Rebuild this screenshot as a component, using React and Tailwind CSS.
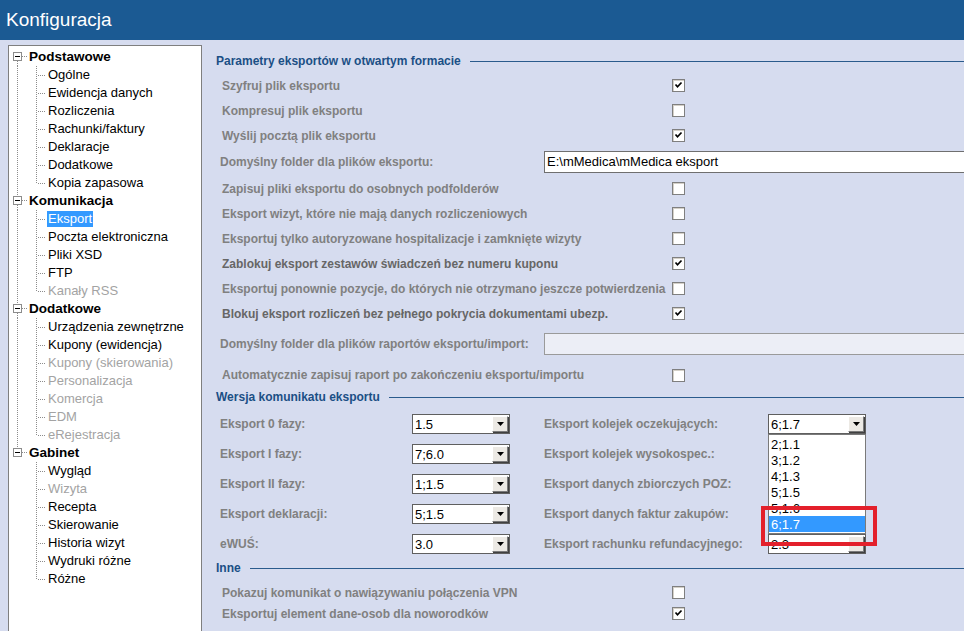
import React from "react";

const FONT = { fontFamily: '"Liberation Sans", Arial, sans-serif' };

const TREE = [
  {
    name: "Podstawowe",
    children: ["Ogólne", "Ewidencja danych", "Rozliczenia", "Rachunki/faktury", "Deklaracje", "Dodatkowe", "Kopia zapasowa"],
  },
  {
    name: "Komunikacja",
    children: ["Eksport", "Poczta elektroniczna", "Pliki XSD", "FTP", "Kanały RSS"],
  },
  {
    name: "Dodatkowe",
    children: [
      "Urządzenia zewnętrzne",
      "Kupony (ewidencja)",
      "Kupony (skierowania)",
      "Personalizacja",
      "Komercja",
      "EDM",
      "eRejestracja",
    ],
  },
  {
    name: "Gabinet",
    children: ["Wygląd", "Wizyta", "Recepta", "Skierowanie", "Historia wizyt", "Wydruki różne", "Różne"],
  },
];

const DISABLED = ["Kanały RSS", "Kupony (skierowania)", "Personalizacja", "Komercja", "EDM", "eRejestracja", "Wizyta"];

const DOT = { stroke: "#8c8c8c", strokeDasharray: "1 1", strokeWidth: 1 };

function RootRow({ name, first, last }) {
  return (
    <div className="flex items-center h-[18px]">
      <svg width="20" height="18" className="shrink-0">
        {!first && <line x1="8.5" y1="0" x2="8.5" y2="4" {...DOT} />}
        {!last && <line x1="8.5" y1="13" x2="8.5" y2="18" {...DOT} />}
        <line x1="13" y1="8.5" x2="19" y2="8.5" {...DOT} />
        <rect x="4.5" y="4.5" width="8" height="8" fill="#fff" stroke="#8c8c8c" />
        <line x1="6" y1="8.5" x2="11" y2="8.5" stroke="#000" />
      </svg>
      <span className="text-[13.5px] font-bold text-black leading-none">{name}</span>
    </div>
  );
}

function ChildRow({ name, lastChild, lastGroup }) {
  const disabled = DISABLED.includes(name);
  const selected = name === "Eksport";
  return (
    <div className="flex items-center h-[18px]">
      <svg width="38" height="18" className="shrink-0">
        {!lastGroup && <line x1="8.5" y1="0" x2="8.5" y2="18" {...DOT} />}
        <line x1="27.5" y1="0" x2="27.5" y2={lastChild ? 10 : 18} {...DOT} />
        <line x1="29" y1="9.5" x2="37" y2="9.5" {...DOT} />
      </svg>
      <span
        className={
          "text-[13px] leading-[16px] px-[1px] " +
          (selected ? "bg-[#3399ff] text-white" : disabled ? "text-[#a3a3a3]" : "text-black")
        }
      >
        {name}
      </span>
    </div>
  );
}

function Checkbox({ checked }) {
  return (
    <div className="w-[13px] h-[13px] border border-[#7f7f7f] bg-white flex items-center justify-center shadow-[inset_1px_1px_0_#d4d0c8]">
      {checked && (
        <svg width="9" height="9" viewBox="0 0 9 9">
          <path d="M1.5 3.5 L3.5 5.8 L7.5 1.5" stroke="#000" strokeWidth="1.7" fill="none" />
        </svg>
      )}
    </div>
  );
}

function Heading({ title }) {
  return (
    <div className="flex items-center h-[18px]">
      <span className="text-[12px] font-bold text-[#1b4f85] whitespace-nowrap">{title}</span>
      <div className="flex-1 h-px bg-[#2a5b8c] ml-[9px]" />
    </div>
  );
}

function CheckRow({ label, checked, dark, h = "h-[25px]" }) {
  return (
    <div className={"flex items-center pl-[6px] " + h}>
      <span className={"w-[450px] text-[12px] font-bold " + (dark ? "text-[#666666]" : "text-[#808080]")}>
        {label}
      </span>
      <Checkbox checked={checked} />
    </div>
  );
}

function Combo({ value, children }) {
  return (
    <div className="relative w-[98px] h-[20px] bg-white border border-[#5f5f5f] flex items-center">
      <span className="flex-1 pl-[2px] text-[13px] text-black leading-none">{value}</span>
      <div className="w-[16px] h-[16px] mr-[1px] bg-[#ece9e4] border-t border-l border-white border-b border-r border-b-[#7a7a7a] border-r-[#7a7a7a] flex items-center justify-center shadow-[1px_1px_0_#404040]">
        <svg width="7" height="4" viewBox="0 0 7 4">
          <path d="M0 0 H7 L3.5 4 Z" fill="#000" />
        </svg>
      </div>
      {children}
    </div>
  );
}

function ComboRow({ left, leftVal, right, rightVal, children }) {
  return (
    <div className="flex items-center h-[30px] pl-[4px]">
      <span className="w-[192px] text-[12px] font-bold text-[#808080]">{left}</span>
      <Combo value={leftVal} />
      <span className="w-[224px] ml-[34px] text-[12px] font-bold text-[#808080]">{right}</span>
      <Combo value={rightVal}>{children}</Combo>
    </div>
  );
}

const LIST = ["2;1.1", "3;1.2", "4;1.3", "5;1.5", "5;1.6", "6;1.7"];

function DropList() {
  return (
    <>
      <div className="absolute left-[-1px] top-[19px] w-[98px] bg-white border border-[#7a7a7a] py-[1px] z-10">
        {LIST.map((v) => (
          <div
            key={v}
            className={
              "h-[16px] flex items-center pl-[2px] text-[13px] leading-none " +
              (v === "6;1.7" ? "bg-[#3399ff] text-white" : "text-black")
            }
          >
            {v}
          </div>
        ))}
      </div>
      <div className="absolute left-[-8px] top-[91px] w-[116px] h-[40px] border-[4px] border-[#e3202b] z-20" />
    </>
  );
}

export default function App() {
  return (
    <div className="w-[964px] h-[631px] overflow-hidden bg-[#d6dcef] flex flex-col" style={FONT}>
      <div className="h-[40px] shrink-0 bg-[#1b5a93] flex items-center pl-[6px]">
        <span className="text-white text-[19px]">Konfiguracja</span>
      </div>

      <div className="flex flex-1 min-h-0 pt-[5px]">
        {/* tree */}
        <div className="ml-[8px] w-[194px] shrink-0 bg-white border border-[#7f7f7f] border-b-0 pt-[2px]">
          {TREE.map((g, gi) => (
            <div key={g.name + gi}>
              <RootRow name={g.name} first={gi === 0} last={gi === TREE.length - 1} />
              {g.children.map((c, ci) => (
                <ChildRow
                  key={c}
                  name={c}
                  lastChild={ci === g.children.length - 1}
                  lastGroup={gi === TREE.length - 1}
                />
              ))}
            </div>
          ))}
        </div>

        {/* settings */}
        <div className="flex-1 min-w-0 pl-[14px] pt-[7px]">
          <Heading title="Parametry eksportów w otwartym formacie" />
          <div className="pt-[3px]">
            <CheckRow label="Szyfruj plik eksportu" checked />
            <CheckRow label="Kompresuj plik eksportu" />
            <CheckRow label="Wyślij pocztą plik eksportu" checked />
            <div className="flex items-center h-[28px] pl-[4px]">
              <span className="w-[324px] text-[12px] font-bold text-[#808080]">Domyślny folder dla plików eksportu:</span>
              <div className="flex-1 h-[22px] bg-white border border-[#6f6f6f] border-r-0 flex items-center pl-[2px] text-[13px] text-black">
                E:\mMedica\mMedica eksport
              </div>
            </div>
            <CheckRow label="Zapisuj pliki eksportu do osobnych podfolderów" />
            <CheckRow label="Eksport wizyt, które nie mają danych rozliczeniowych" />
            <CheckRow label="Eksportuj tylko autoryzowane hospitalizacje i zamknięte wizyty" />
            <CheckRow label="Zablokuj eksport zestawów świadczeń bez numeru kuponu" checked dark />
            <CheckRow label="Eksportuj ponownie pozycje, do których nie otrzymano jeszcze potwierdzenia" />
            <CheckRow label="Blokuj eksport rozliczeń bez pełnego pokrycia dokumentami ubezp." checked dark />
            <div className="flex items-center h-[36px] pl-[4px]">
              <span className="w-[324px] text-[12px] font-bold text-[#808080]">
                Domyślny folder dla plików raportów eksportu/import:
              </span>
              <div className="flex-1 h-[22px] bg-[#eceef6] border border-[#9a9a9a] border-r-0" />
            </div>
            <CheckRow label="Automatycznie zapisuj raport po zakończeniu eksportu/importu" h="h-[26px]" />
          </div>

          <Heading title="Wersja komunikatu eksportu" />
          <div className="pt-[3px]">
            <ComboRow left="Eksport 0 fazy:" leftVal="1.5" right="Eksport kolejek oczekujących:" rightVal="6;1.7">
              <DropList />
            </ComboRow>
            <ComboRow left="Eksport I fazy:" leftVal="7;6.0" right="Eksport kolejek wysokospec.:" rightVal="" />
            <ComboRow left="Eksport II fazy:" leftVal="1;1.5" right="Eksport danych zbiorczych POZ:" rightVal="" />
            <ComboRow left="Eksport deklaracji:" leftVal="5;1.5" right="Eksport danych faktur zakupów:" rightVal="" />
            <ComboRow left="eWUŚ:" leftVal="3.0" right="Eksport rachunku refundacyjnego:" rightVal="2.3" />
          </div>

          <Heading title="Inne" />
          <div className="pt-[5px]">
            <CheckRow label="Pokazuj komunikat o nawiązywaniu połączenia VPN" h="h-[21px]" />
            <CheckRow label="Eksportuj element dane-osob dla noworodków" checked h="h-[21px]" />
          </div>
        </div>
      </div>
    </div>
  );
}
